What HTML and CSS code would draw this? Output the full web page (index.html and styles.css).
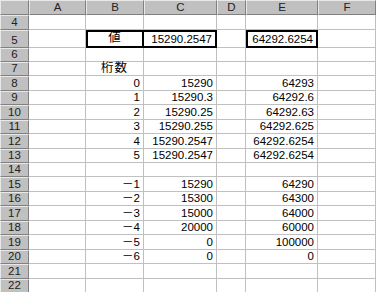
FILE: index.html
```html
<html>
<head>
  <title>Sheet1</title>
  <link rel="stylesheet" href="styles.css">
</head>
<body>
<div class="sheet">
  <!-- column headers -->
  <div class="hd corner"></div>
  <div class="hd">A</div>
  <div class="hd">B</div>
  <div class="hd">C</div>
  <div class="hd">D</div>
  <div class="hd">E</div>
  <div class="hd">F</div>

  <div class="hd rn">4</div><div class="c"></div><div class="c"></div><div class="c"></div><div class="c"></div><div class="c"></div><div class="c"></div>

  <!-- row 5: the input values -->
  <div class="hd rn">5</div><div class="c"></div>
  <div class="c mid box-l">値</div>
  <div class="c num box-r">15290.2547</div>
  <div class="c"></div>
  <div class="c num box">64292.6254</div>
  <div class="c"></div>

  <div class="hd rn">6</div><div class="c"></div><div class="c"></div><div class="c"></div><div class="c"></div><div class="c"></div><div class="c"></div>
  <div class="hd rn">7</div><div class="c"></div><div class="c mid">桁数</div><div class="c"></div><div class="c"></div><div class="c"></div><div class="c"></div>

  <div class="hd rn">8</div><div class="c"></div><div class="c num">0</div><div class="c num">15290</div><div class="c"></div><div class="c num">64293</div><div class="c"></div>
  <div class="hd rn">9</div><div class="c"></div><div class="c num">1</div><div class="c num">15290.3</div><div class="c"></div><div class="c num">64292.6</div><div class="c"></div>
  <div class="hd rn">10</div><div class="c"></div><div class="c num">2</div><div class="c num">15290.25</div><div class="c"></div><div class="c num">64292.63</div><div class="c"></div>
  <div class="hd rn">11</div><div class="c"></div><div class="c num">3</div><div class="c num">15290.255</div><div class="c"></div><div class="c num">64292.625</div><div class="c"></div>
  <div class="hd rn">12</div><div class="c"></div><div class="c num">4</div><div class="c num">15290.2547</div><div class="c"></div><div class="c num">64292.6254</div><div class="c"></div>
  <div class="hd rn">13</div><div class="c"></div><div class="c num">5</div><div class="c num">15290.2547</div><div class="c"></div><div class="c num">64292.6254</div><div class="c"></div>
  <div class="hd rn">14</div><div class="c"></div><div class="c"></div><div class="c"></div><div class="c"></div><div class="c"></div><div class="c"></div>

  <div class="hd rn">15</div><div class="c"></div><div class="c num">－1</div><div class="c num">15290</div><div class="c"></div><div class="c num">64290</div><div class="c"></div>
  <div class="hd rn">16</div><div class="c"></div><div class="c num">－2</div><div class="c num">15300</div><div class="c"></div><div class="c num">64300</div><div class="c"></div>
  <div class="hd rn">17</div><div class="c"></div><div class="c num">－3</div><div class="c num">15000</div><div class="c"></div><div class="c num">64000</div><div class="c"></div>
  <div class="hd rn">18</div><div class="c"></div><div class="c num">－4</div><div class="c num">20000</div><div class="c"></div><div class="c num">60000</div><div class="c"></div>
  <div class="hd rn">19</div><div class="c"></div><div class="c num">－5</div><div class="c num">0</div><div class="c"></div><div class="c num">100000</div><div class="c"></div>
  <div class="hd rn">20</div><div class="c"></div><div class="c num">－6</div><div class="c num">0</div><div class="c"></div><div class="c num">0</div><div class="c"></div>
  <div class="hd rn">21</div><div class="c"></div><div class="c"></div><div class="c"></div><div class="c"></div><div class="c"></div><div class="c"></div>
  <div class="hd rn">22</div><div class="c"></div><div class="c"></div><div class="c"></div><div class="c"></div><div class="c"></div><div class="c"></div>
</div>
</body>
</html>
```
FILE: styles.css
```css
body {
  margin: 0;
  padding: 0;
  background-color: #fff;
  overflow: hidden;
}

/* the worksheet grid; row 5 is a little taller */
.sheet {
  display: grid;
  grid-template-columns: 29px 57px 58px 73px 29px 72px 1fr;
  grid-template-rows: 15px 14.5px 18px repeat(17, 14.45px);
  font-family: "Liberation Sans", "Noto Sans CJK JP", sans-serif;
  font-size: 11.5px;
  color: #000;
}

.sheet > div {
  box-sizing: border-box;
  display: flex;
  align-items: flex-end;
  padding-bottom: 1px;
  line-height: 12px;
  white-space: nowrap;
}

/* raised grey header buttons */
.hd {
  background-color: #c0c0c0;
  border-top: 1px solid #e8e8e8;
  border-left: 1px solid #e8e8e8;
  border-right: 1px solid #808080;
  border-bottom: 1px solid #808080;
  justify-content: center;
  color: #222;
}

.corner {
  background-color: #c0c0c0;
}

/* plain cells with light gridlines */
.c {
  border-right: 1px solid #c0c0c0;
  border-bottom: 1px solid #c0c0c0;
}

.num {
  justify-content: flex-end;
  padding-right: 3px;
}

.sheet > .mid {
  justify-content: center;
  align-items: center;
  padding-bottom: 0;
  font-size: 12.5px;
  line-height: 13px;
  letter-spacing: 1px;
}

/* thick outline around the input cells */
.box-l {
  border: 2px solid #000;
}

.box-r {
  border-top: 2px solid #000;
  border-right: 2px solid #000;
  border-bottom: 2px solid #000;
}

.box {
  border: 2px solid #000;
}
```
